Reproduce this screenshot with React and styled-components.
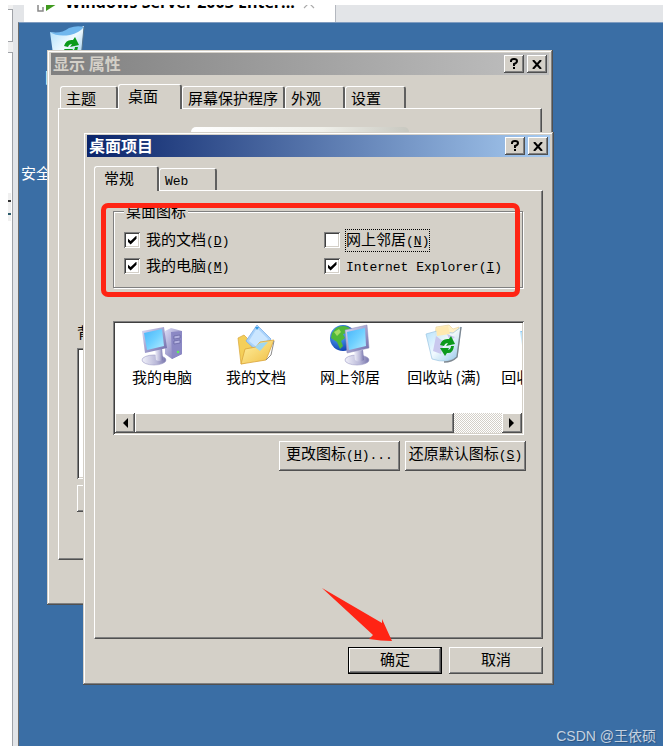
import React, { useState } from 'react'
import styled, { createGlobalStyle, css } from 'styled-components';

const GlobalStyle = createGlobalStyle`
    * {
        box-sizing: border-box;
    }
    body {
        margin: 0;
        background: #fff;
    }
    body, button, input {
        font-family: "Noto Sans CJK SC", sans-serif;
        font-size: 15px;
        line-height: 20px;
        color: #000;
    }
`

const raised = css`
    background: #d4d0c8;
    box-shadow: inset -1px -1px #505050, inset 1px 1px #fff, inset -2px -2px #808080;
`

const sunken = css`
    background: #fff;
    box-shadow: inset 1px 1px #808080, inset -1px -1px #fff, inset 2px 2px #404040, inset -2px -2px #d4d0c8;
`

const Page = styled.div`
    display: flex;
    min-height: 100vh;
    padding: 5px 9px 8px 8px;
`

const SidePane = styled.aside`
    display: flex;
    flex-direction: column;
    gap: 10px;
    width: 5px;
    padding-top: 4px;
    background: #f0f0f0;
`
const SideField = styled.div`
    flex: ${props => props.$grow ? '1' : '0 0 33px'};
    padding-top: ${props => props.$grow ? '140px' : '0'};
    background: #fff;
    border: 1px solid #a0a3a8;
    border-left: none;
    border-bottom-width: ${props => props.$grow ? '0' : '1px'};
`
const SideItem = styled.div`
    display: flex;
    flex-direction: column;
    gap: 11px;
    width: 3px;
    height: 28px;
    padding-top: 7px;
    background: #f0f0f0;
    &::before, &::after {
        content: "";
        height: 2px;
        background: #333;
    }
    &::after {
        background: #2b5a6b;
    }
`

const Console = styled.main`
    flex: 1;
    display: flex;
    flex-direction: column;
    min-width: 0;
    padding-left: 5px;
    background: #e3e5e8;
`
const TabStrip = styled.div`
    display: flex;
    height: 17px;
    padding-left: 6px;
    overflow: hidden;
`
const MachineTab = styled.div`
    display: flex;
    align-items: flex-end;
    gap: 8px;
    width: 312px;
    padding: 0 8px 10px 8px;
    background: #fff;
    border-right: 1px solid #b4b8bf;
    font-family: "Open Sans", sans-serif;
    font-size: 16px;
    font-weight: bold;
    white-space: nowrap;
    svg {
        flex: none;
    }
`
const Desktop = styled.div`
    position: relative;
    flex: 1;
    min-height: 724px;
    overflow: hidden;
    background: #3a6ea5;
    border-top: 1px solid #7f9cc0;
    border-left: 1px solid #6b6b6b;
`

const DesktopIcon = styled.div`
    position: absolute;
    left: ${props => props.$left}px;
    top: ${props => props.$top}px;
    display: flex;
    flex-direction: column;
    align-items: center;
    color: #fff;
    white-space: nowrap;
`

const Window = styled.section`
    position: absolute;
    left: ${props => props.$left}px;
    top: ${props => props.$top}px;
    width: ${props => props.$width}px;
    padding: 3px 4px 11px;
    background: #d4d0c8;
    box-shadow: inset -1px -1px #505050, inset 1px 1px #d4d0c8, inset -2px -2px #808080, inset 2px 2px #fff;
`
const TitleBar = styled.header`
    display: flex;
    align-items: center;
    gap: 3px;
    height: 22px;
    padding: 0 2px;
    color: ${props => props.$active ? '#fff' : '#d4d0c8'};
    background: ${props => props.$active
        ? 'linear-gradient(to right, #0a246a, #a6caf0)'
        : 'linear-gradient(to right, #808080, #c0c0c0)'};
    h2 {
        flex: 1;
        margin: 0;
        font-size: 16px;
        line-height: 20px;
        font-weight: bold;
        padding-bottom: 2px;
    }
`
const TitleButton = styled.button`
    ${raised}
    display: grid;
    place-items: center;
    width: 20px;
    height: 18px;
    padding: 0;
    border: none;
`

const Tabs = styled.div`
    display: flex;
    align-items: flex-end;
    height: 24px;
    margin: 9px 7px 0;
    padding-left: ${props => props.$indent ? '2px' : '0'};
`
const Tab = styled.button`
    width: ${props => props.$width}px;
    height: ${props => props.$active ? '25px' : '22px'};
    margin-bottom: ${props => props.$active ? '-1px' : '0'};
    padding: ${props => props.$active ? '0 9px 3px' : '0 4px 0 5px'};
    z-index: ${props => props.$active ? '1' : '0'};
    text-align: left;
    white-space: nowrap;
    background: #d4d0c8;
    border: none;
    border-top: 1px solid #fff;
    border-left: 1px solid #fff;
    border-right: 2px solid #606060;
    border-radius: 3px 3px 0 0;
`
const Panel = styled.div`
    min-height: ${props => props.$height}px;
    margin: 0 7px;
    padding: ${props => props.$padding};
    border: 1px solid;
    border-color: #fff #505050 #505050 #fff;
    box-shadow: inset -1px -1px #808080;
`

const Mono = styled.span`
    font-family: "Liberation Mono", monospace;
    font-size: 13px;
`

const Group = styled.fieldset`
    position: relative;
    display: grid;
    grid-template-columns: 200px 1fr;
    grid-auto-rows: 26px;
    align-items: center;
    width: 410px;
    margin: 0;
    padding: 8px 10px;
    border: 1px solid #808080;
    box-shadow: 1px 1px #fff, inset 1px 1px #fff;
    legend {
        padding: 0 2px;
        line-height: 16px;
        background: #d4d0c8;
    }
`
const Check = styled.label`
    display: flex;
    align-items: center;
    gap: 5px;
    white-space: nowrap;
    span.text {
        line-height: 18px;
        border: 1px dotted ${props => props.$focused ? '#000' : 'transparent'};
    }
    input {
        ${sunken}
        appearance: none;
        display: grid;
        place-items: center;
        width: 16px;
        height: 16px;
        margin: 0;
    }
    input:checked::before {
        content: "";
        width: 9px;
        height: 9px;
        background: #000;
        clip-path: polygon(0 30%, 35% 62%, 100% 0, 100% 35%, 35% 100%, 0 68%);
    }
`
/* red marker around the checkbox group */
const MarkedArea = styled.div`
    position: relative;
`
const Marker = styled.div`
    position: absolute;
    inset: 0 6px -9px -12px;
    border: 5px solid #ff2414;
    border-radius: 7px;
    pointer-events: none;
`
const Arrow = styled.svg`
    position: absolute;
    left: 238px;
    top: 455px;
    pointer-events: none;
`

const ListBox = styled.div`
    ${sunken}
    width: 411px;
    margin-top: 33px;
    padding: 2px;
`
const IconList = styled.div`
    display: grid;
    grid-template-columns: repeat(5, 94px);
    height: 90px;
    padding-top: 1px;
    overflow: hidden;
`
const IconItem = styled.figure`
    display: flex;
    flex-direction: column;
    align-items: center;
    margin: 0;
    white-space: nowrap;
    figcaption {
        padding-top: 1px;
    }
`
const ScrollBar = styled.div`
    display: flex;
    height: 20px;
    background: repeating-conic-gradient(#fff 0 25%, #d4d0c8 0 50%) 0 0 / 2px 2px;
`
const ScrollButton = styled.button`
    ${raised}
    display: grid;
    place-items: center;
    width: 20px;
    padding: 0;
    border: none;
`
const Thumb = styled.div`
    ${raised}
    width: 319px;
    margin-right: auto;
`

const Actions = styled.div`
    display: flex;
    justify-content: flex-end;
    gap: ${props => props.$gap}px;
    margin: ${props => props.$margin};
`
const Button = styled.button`
    ${raised}
    width: ${props => props.$width}px;
    height: ${props => props.$height}px;
    padding: 0 0 3px;
    white-space: nowrap;
    border: ${props => props.$default ? '1px solid #000' : 'none'};
`

const Preview = styled.div`
    width: 218px;
    height: 180px;
    margin: 0 auto;
    background: linear-gradient(to right, #fff, #f0f0ea 60%, #c8c8c0);
    border-radius: 5px;
`
const BackgroundLabel = styled.label`
    display: block;
    height: 20px;
    margin-top: 15px;
`
const BackgroundList = styled.div`
    ${sunken}
    width: 330px;
    height: 131px;
    margin: 6px 0;
`

const Watermark = styled.div`
    position: absolute;
    right: 7px;
    bottom: 0;
    color: #c5d2e0;
    font-family: "Liberation Sans", "Noto Sans CJK SC", sans-serif;
    font-size: 14px;
    text-shadow: 1px 1px 1px #2c5480;
`

const IconDefs = styled.svg`
    position: absolute;
`

const Gradients = () => (
    <IconDefs width="0" height="0" aria-hidden="true">
        <defs>
            <linearGradient id="screen" x1="0" y1="0" x2="1" y2="1">
                <stop offset="0" stopColor="#48b4fa" />
                <stop offset="0.5" stopColor="#6fd0ff" />
                <stop offset="1" stopColor="#b5ecff" />
            </linearGradient>
            <linearGradient id="case" x1="0" y1="0" x2="1" y2="1">
                <stop offset="0" stopColor="#dcdcf6" />
                <stop offset="1" stopColor="#6c68a8" />
            </linearGradient>
            <linearGradient id="stand" x1="0" y1="0" x2="1" y2="0">
                <stop offset="0" stopColor="#f2f2fb" />
                <stop offset="0.6" stopColor="#b9b8d8" />
                <stop offset="1" stopColor="#7774ac" />
            </linearGradient>
            <linearGradient id="folder" x1="0" y1="0" x2="1" y2="1">
                <stop offset="0" stopColor="#fff3a6" />
                <stop offset="1" stopColor="#f0bd42" />
            </linearGradient>
            <radialGradient id="globe" cx="0.35" cy="0.35" r="0.7">
                <stop offset="0" stopColor="#5db7ff" />
                <stop offset="1" stopColor="#0c3db0" />
            </radialGradient>
            <linearGradient id="bin" x1="0" y1="0" x2="1" y2="1">
                <stop offset="0" stopColor="#a9dcfa" />
                <stop offset="0.5" stopColor="#f0faff" />
                <stop offset="1" stopColor="#86bfe6" />
            </linearGradient>
        </defs>
    </IconDefs>
)

const ComputerIcon = () => (
    <svg width="42" height="42" viewBox="0 0 42 42">
        <path d="M24 7 L30 4 L41 7 L41 30 L31 35 L24 30Z" fill="url(#case)" />
        <path d="M30 8 L41 7 L41 30 L31 35Z" fill="#8b88c4" />
        <path d="M33 12 L39 11 V14 L33 15Z M33 17 L39 16 V19 L33 20Z" fill="#b4b2e0" stroke="#5d5a98" strokeWidth="0.6" />
        <circle cx="37" cy="28" r="1.3" fill="#5df05a" />
        <ellipse cx="13" cy="36" rx="12" ry="5" fill="url(#stand)" stroke="#9c9ac4" strokeWidth="0.6" />
        <path d="M14 26 L21 24 L22 36 Q18 38 15 36Z" fill="url(#stand)" />
        <path d="M1 7 L23 3 L26 24 L4 29Z" fill="url(#case)" />
        <path d="M3 9 L21 5 L23 22 L6 26Z" fill="url(#screen)" />
    </svg>
)

const DocumentsIcon = () => (
    <svg width="42" height="42" viewBox="0 0 42 42">
        <path d="M3 14 L9 11 L13 15 L18 13 L16 37 L6 40Z" fill="#f4cf59" stroke="#d8a53a" strokeWidth="0.7" />
        <path d="M22 1 L36 15 L24 29 L11 17Z" fill="#a9d2fa" stroke="#7faee6" strokeWidth="0.8" />
        <path d="M22 4 L33 15 L24 25 L14 17Z" fill="#cbe6ff" />
        <path d="M20 3 h4 l-2 3Z" fill="#2f9ae6" />
        <path d="M10 25 L21 23 L25 18 L39 16 L31 36 L6 40Z" fill="url(#folder)" stroke="#dba53a" strokeWidth="0.8" />
        <path d="M20 23 L25 19 L33 18 L25 27Z" fill="#9fd7f2" />
        <path d="M39 17 L36 31 L31 36" fill="none" stroke="#8b8b8b" strokeWidth="1" />
    </svg>
)

const NetworkIcon = () => (
    <svg width="42" height="42" viewBox="0 0 42 42">
        <circle cx="14" cy="14" r="13" fill="url(#globe)" />
        <path d="M7 4 Q14 0 21 4 L18 9 L14 10 L16 14 L12 17 L14 22 L11 25 L8 18 L2 14 L3 9Z" fill="#4fb83a" />
        <path d="M5 8 L10 5 L12 8 L8 12Z" fill="#a3dd62" />
        <ellipse cx="28" cy="36" rx="12" ry="5" fill="url(#stand)" stroke="#9c9ac4" strokeWidth="0.6" />
        <path d="M25 27 L34 26 L35 36 Q30 39 26 36Z" fill="url(#stand)" />
        <path d="M16 6 L38 1 L40 24 L18 29Z" fill="url(#case)" stroke="#8a88b5" strokeWidth="0.5" />
        <path d="M18 8 L36 4 L37 22 L20 26Z" fill="url(#screen)" />
    </svg>
)

const RecycleArrows = () => (
    <g fill="#0b9a1c">
        <path d="M17 21 Q19 14 26 15 L28 12 L32 20 L23 22 L25 19 Q22 19 21 22Z" />
        <path d="M31 22 Q30 30 24 29 L22 32 L17 24 L26 24 L25 26 Q28 25 28 22Z" />
    </g>
)

const FullBinIcon = () => (
    <svg width="42" height="42" viewBox="0 0 42 42">
        <path d="M13 3 L26 1 L30 5 L36 3 L33 14 L12 16Z" fill="#fff0c4" stroke="#e8cf94" strokeWidth="0.6" />
        <path d="M3 10 L14 7 L30 9 L38 3 L34 33 Q24 40 9 35Z" fill="url(#bin)" stroke="#8fbfe0" strokeWidth="0.7" opacity="0.9" />
        <path d="M13 4 L25 2 L27 10 L14 12Z" fill="#ffe9b0" />
        <path d="M13 12 L21 18 L18 30 L10 27Z M24 10 L32 13 L27 17Z" fill="#c9c8ee" />
        <path d="M38 3 L34 33 Q29 38 21 38" fill="none" stroke="#7d8790" strokeWidth="1.4" />
        <RecycleArrows />
    </svg>
)

const EmptyBinIcon = () => (
    <svg width="42" height="42" viewBox="0 0 42 42">
        <path d="M3 7 L14 9 L24 6 L37 1 L34 34 Q22 42 7 36Z" fill="url(#bin)" />
        <path d="M3 7 Q14 9 22 3 Q30 0 37 2 Q32 8 23 10 Q10 12 3 7Z" fill="#70b7ee" />
        <path d="M37 2 L34 34" stroke="#57758c" strokeWidth="1" />
        <RecycleArrows />
    </svg>
)

const icons = [
    { name: '我的电脑', Icon: ComputerIcon },
    { name: '我的文档', Icon: DocumentsIcon },
    { name: '网上邻居', Icon: NetworkIcon },
    { name: '回收站 (满)', Icon: FullBinIcon },
    { name: '回收站 (空)', Icon: EmptyBinIcon },
]

const WindowButtons = () => (
    <>
        <TitleButton aria-label="帮助">
            <svg width="8" height="12" viewBox="0 0 8 12">
                <path d="M1 4 V3 Q1 1 4 1 Q7 1 7 3 Q7 5 4 6 V8" fill="none" stroke="#000" strokeWidth="2" />
                <path d="M3 9 h2 v2 h-2Z" />
            </svg>
        </TitleButton>
        <TitleButton aria-label="关闭">
            <svg width="10" height="9" viewBox="0 0 10 9">
                <path d="M1 0 L9 9 M9 0 L1 9" stroke="#000" strokeWidth="2" />
            </svg>
        </TitleButton>
    </>
)

const Key = ({ letter }) => <Mono>(<u>{letter}</u>)</Mono>

const Option = ({ children, checked, onChange, focused }) => (
    <Check $focused={focused}>
        <input type="checkbox" checked={checked} onChange={onChange} />
        <span className="text">{children}</span>
    </Check>
)

const DisplayWindow = () => (
    <Window $left={28} $top={27} $width={506}>
        <TitleBar>
            <h2>显示 属性</h2>
            <WindowButtons />
        </TitleBar>
        <Tabs role="tablist" $indent>
            <Tab role="tab" $width={58}>主题</Tab>
            <Tab role="tab" $width={64} $active aria-selected="true">桌面</Tab>
            <Tab role="tab" $width={103}>屏幕保护程序</Tab>
            <Tab role="tab" $width={60}>外观</Tab>
            <Tab role="tab" $width={61}>设置</Tab>
        </Tabs>
        <Panel $height={452} $padding="18px 18px 0">
            <Preview />
            <BackgroundLabel>背景</BackgroundLabel>
            <BackgroundList />
            <Button $width={121} $height={27} aria-label="自定义桌面" />
        </Panel>
        <Actions $gap={7} $margin="7px 7px 0">
            <Button $width={94} $height={27} aria-label="应用" />
        </Actions>
    </Window>
)

const ItemsWindow = () => {

    const [checked, setChecked] = useState({ docs: true, places: false, computer: true, ie: true })

    const toggle = (id) => () => setChecked({ ...checked, [id]: !checked[id] })

    return (
        <Window $left={64} $top={109} $width={471}>
            <TitleBar $active>
                <h2>桌面项目</h2>
                <WindowButtons />
            </TitleBar>
            <Tabs role="tablist">
                <Tab role="tab" $width={65} $active aria-selected="true">常规</Tab>
                <Tab role="tab" $width={58}><Mono>Web</Mono></Tab>
            </Tabs>
            <Panel $height={449} $padding="12px 16px 0 18px">
                <MarkedArea>
                    <Group>
                        <legend>桌面图标</legend>
                        <Option checked={checked.docs} onChange={toggle('docs')}>我的文档<Key letter="D" /></Option>
                        <Option checked={checked.places} onChange={toggle('places')} focused>网上邻居<Key letter="N" /></Option>
                        <Option checked={checked.computer} onChange={toggle('computer')}>我的电脑<Key letter="M" /></Option>
                        <Option checked={checked.ie} onChange={toggle('ie')}><Mono>Internet Explorer</Mono><Key letter="I" /></Option>
                    </Group>
                    <Marker />
                </MarkedArea>
                <ListBox>
                    <IconList>
                        {icons.map(({ name, Icon }) => (
                            <IconItem key={name}>
                                <Icon />
                                <figcaption>{name}</figcaption>
                            </IconItem>
                        ))}
                    </IconList>
                    <ScrollBar>
                        <ScrollButton aria-label="向左滚动">
                            <svg width="6" height="10" viewBox="0 0 6 10"><path d="M6 0 V10 L1 5Z" /></svg>
                        </ScrollButton>
                        <Thumb />
                        <ScrollButton aria-label="向右滚动">
                            <svg width="6" height="10" viewBox="0 0 6 10"><path d="M0 0 V10 L5 5Z" /></svg>
                        </ScrollButton>
                    </ScrollBar>
                </ListBox>
                <Actions $gap={5} $margin="6px 0 0">
                    <Button $width={121} $height={30}>更改图标<Key letter="H" /><Mono>...</Mono></Button>
                    <Button $width={121} $height={30}>还原默认图标<Key letter="S" /></Button>
                </Actions>
            </Panel>
            <Actions $gap={7} $margin="8px 7px 0">
                <Button $width={94} $height={27} $default>确定</Button>
                <Button $width={94} $height={27}>取消</Button>
            </Actions>
            <Arrow width="72" height="56" viewBox="0 0 72 56">
                <path d="M1 1 L61 36 V32 L71 54 Q60 54 48 52 L52 48Z" fill="#ff2414" />
            </Arrow>
        </Window>
    );
}

const App = () => (
    <>
        <GlobalStyle />
        <Gradients />
        <Page>
            <SidePane>
                <SideField />
                <SideField $grow>
                    <SideItem />
                </SideField>
            </SidePane>
            <Console>
                <TabStrip>
                    <MachineTab>
                        <svg width="25" height="16" viewBox="0 0 25 16">
                            <path d="M6 2 V15 H11 V11" fill="none" stroke="#888" strokeWidth="1.5" />
                            <path d="M14 0 L25 8 L14 15Z" fill="#3f9a1e" />
                        </svg>
                        <span>Windows Server 2003 Enter...</span>
                        <svg width="12" height="14" viewBox="0 0 12 14">
                            <path d="M1 0 L11 10 M11 0 L1 10" stroke="#aaa" strokeWidth="1.2" />
                        </svg>
                    </MachineTab>
                </TabStrip>
                <Desktop>
                    <DesktopIcon $left={26} $top={2}>
                        <EmptyBinIcon />
                        <span>回收站</span>
                    </DesktopIcon>
                    <DesktopIcon $left={2} $top={140}>安全配置</DesktopIcon>
                    <DisplayWindow />
                    <ItemsWindow />
                    <Watermark>CSDN @王依硕</Watermark>
                </Desktop>
            </Console>
        </Page>
    </>
)

export default App
